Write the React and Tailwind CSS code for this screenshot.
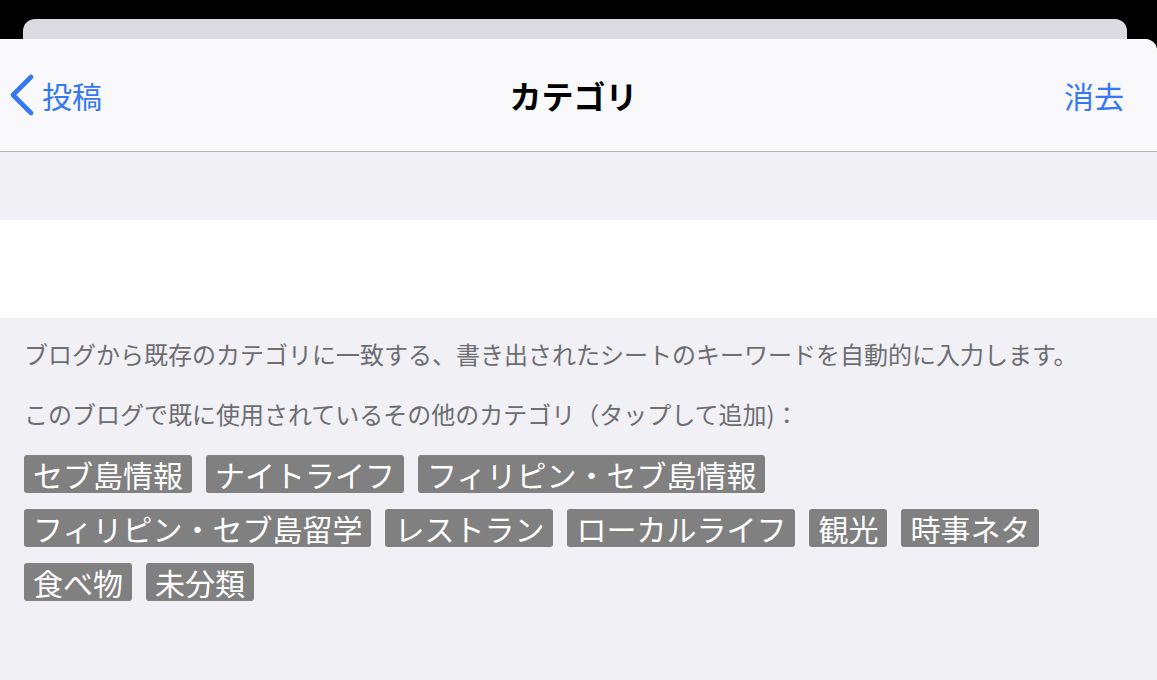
const tags = [
  ['セブ島情報', 'ナイトライフ', 'フィリピン・セブ島情報'],
  ['フィリピン・セブ島留学', 'レストラン', 'ローカルライフ', '観光', '時事ネタ'],
  ['食べ物', '未分類'],
]

const jp = { fontFamily: '"Noto Sans CJK JP", "Noto Sans", sans-serif' }

export default function App() {
  return (
    <div className="h-[680px] w-[1157px] overflow-hidden bg-black" style={jp}>
      {/* card behind the sheet */}
      <div className="pt-[19px]">
        <div className="ml-[23px] mr-[30px] h-[20px] rounded-t-[12px] bg-[#dcdce0]" />
      </div>

      <div className="h-[641px] rounded-tr-[12px] bg-[#f0f0f5]">
        {/* Nav bar */}
        <header className="relative flex h-[113px] items-center justify-between rounded-tr-[12px] border-b border-[#b3b3b7] bg-[#f9f9fb] pl-[9px] pr-[33px]">
          <button className="flex items-center gap-[7px] text-[#3478f6]">
            <svg width="26" height="42" viewBox="0 0 26 42" fill="none">
              <polyline points="22,3 4,21 22,39" stroke="#3478f6" strokeWidth="4.6" strokeLinecap="round" strokeLinejoin="round" />
            </svg>
            <span className="text-[30px] leading-none">投稿</span>
          </button>
          <h1 className="absolute left-1/2 -ml-[5px] -translate-x-1/2 text-[32px] font-bold leading-none text-black">
            カテゴリ
          </h1>
          <button className="text-[30px] leading-none text-[#3478f6]">消去</button>
        </header>

        <div className="h-[68px]" />
        <div className="h-[98px] bg-white" />

        {/* Help text + tags */}
        <div className="px-[24px] pt-[20px]">
          <p className="text-[24px] leading-[32px] text-[#6d6d72]">
            ブログから既存のカテゴリに一致する、書き出されたシートのキーワードを自動的に入力します。
          </p>
          <p className="mt-[28px] text-[24px] leading-[32px] text-[#6d6d72]">
            このブログで既に使用されているその他のカテゴリ（タップして追加)：
          </p>
          <div className="mt-[25px] flex flex-col gap-[16px]">
            {tags.map((row, i) => (
              <div key={i} className="flex gap-[14px]">
                {row.map((t) => (
                  <span key={t} className="rounded-[3px] bg-[#808080] px-[9px] text-[30px] leading-[38px] text-white">
                    {t}
                  </span>
                ))}
              </div>
            ))}
          </div>
        </div>
      </div>
    </div>
  )
}
